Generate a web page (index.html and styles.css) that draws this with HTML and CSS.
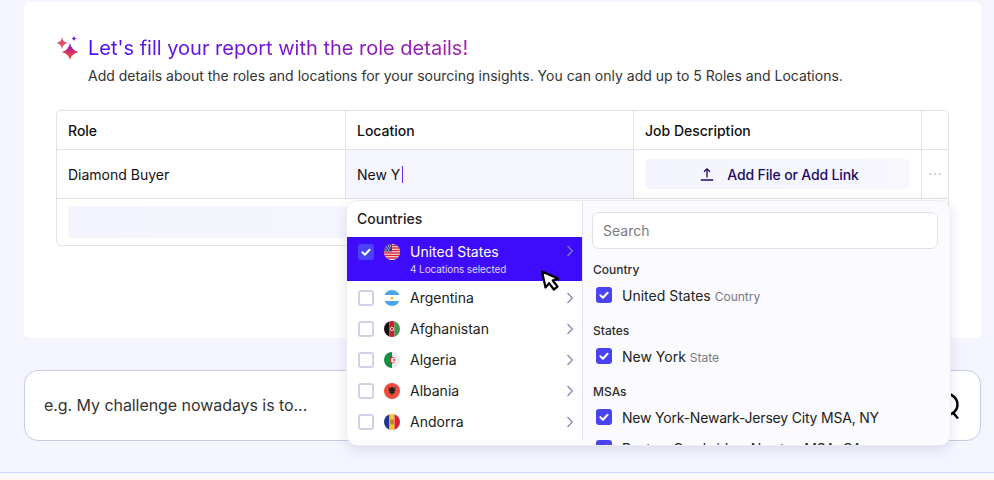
FILE: index.html
```html
<!DOCTYPE html>
<html>
  <head>
    <title>Role details</title>
    <meta charset="utf-8">
    <link rel="stylesheet" href="styles.css">
  </head>
  <body>
    <svg class="defs" width="0" height="0">
      <defs>
        <linearGradient id="spark" x1="0" y1="0" x2="0" y2="1">
          <stop offset="0" stop-color="#6414e6"/>
          <stop offset=".55" stop-color="#d8305f"/>
          <stop offset="1" stop-color="#ff4d3d"/>
        </linearGradient>
        <radialGradient id="spark-small">
          <stop offset="0" stop-color="#ff4d5a"/>
          <stop offset=".55" stop-color="#e0406f"/>
          <stop offset="1" stop-color="#6a18d8"/>
        </radialGradient>
        <symbol id="check" viewBox="0 0 16 16">
          <path d="M4.4 8.3l2.5 2.4 4.7-5" fill="none" stroke="#fff" stroke-width="2" stroke-linecap="round" stroke-linejoin="round"/>
        </symbol>
        <symbol id="chev" viewBox="0 0 8 12">
          <path d="M1.5 1l4.8 5-4.8 5" fill="none" stroke="#7f86b8" stroke-width="1.2"/>
        </symbol>
      </defs>
    </svg>

    <div class="page">
      <section class="card">
        <div class="title-row">
          <svg class="sparkle" width="24" height="24" viewBox="0 0 24 24">
            <path d="M14 7Q15.500 14.500 23 16Q15.500 17.500 14 24Q12.500 17.500 5.500 16Q12.500 14.500 14 7z" fill="url(#spark)"/>
            <path d="M6 1.500Q6.800 6 11.500 7Q6.800 8 6 13Q5.200 8 .8 7Q5.200 6 6 1.500z" fill="url(#spark-small)"/>
            <path d="M18 0Q18.400 2 20.300 2.500Q18.400 3 18 5Q17.600 3 15.700 2.500Q17.600 2 18 0z" fill="#6a14d8"/>
          </svg>
          <h1>Let's fill your report with the role details!</h1>
        </div>
        <p class="subtitle">Add details about the roles and locations for your sourcing insights. You can only add up to 5 Roles and Locations.</p>

        <div class="roles">
          <div class="cell head">Role</div>
          <div class="cell head">Location</div>
          <div class="cell head">Job Description</div>
          <div class="cell head last"></div>

          <div class="cell">Diamond Buyer</div>
          <div class="cell active">New Y<span class="caret"></span></div>
          <div class="cell">
            <button class="add-file">
              <svg width="16" height="16" viewBox="0 0 16 16">
                <path d="M8 11.500V3M5 5.800L8 2.800l3 3M1.800 14h12.400" fill="none" stroke="#1d0a6b" stroke-width="1.300"/>
              </svg>
              Add File or Add Link
            </button>
          </div>
          <div class="cell last dots">···</div>

          <div class="new-row"><div class="blank"></div></div>
        </div>
      </section>

      <div class="prompt">
        <span>e.g. My challenge nowadays is to...</span>
        <svg width="26" height="28" viewBox="0 0 26 28">
          <circle cx="12" cy="12.500" r="10.500" fill="none" stroke="#000" stroke-width="2.400"/>
          <path d="M17.500 20l5.500 6.500" stroke="#000" stroke-width="2.400"/>
        </svg>
      </div>

      <div class="popup">
        <div class="countries">
          <div class="pop-title">Countries</div>

          <div class="country selected">
            <span class="box on"><svg width="16" height="16"><use href="#check"/></svg></span>
            <svg class="flag" viewBox="0 0 16 16">
              <rect width="16" height="16" fill="#fff"/>
              <path d="M0 1.500h16M0 4h16M0 6.500h16M0 9h16M0 11.500h16M0 14h16" stroke="#d8232f" stroke-width="1.300"/>
              <rect width="8" height="7.500" fill="#3c3b8e"/>
              <path d="M1.500 2h1M4 2h1M6 2h1M2.500 4h1M5 4h1M1.500 6h1M4 6h1" stroke="#fff" stroke-width="1"/>
            </svg>
            <div class="country-name">
              United States
              <small>4 Locations selected</small>
            </div>
            <svg class="chev" width="8" height="12"><use href="#chev"/></svg>
          </div>

          <div class="country">
            <span class="box"></span>
            <svg class="flag" viewBox="0 0 16 16">
              <rect width="16" height="16" fill="#fff"/>
              <rect width="16" height="5" fill="#4aa6e8"/>
              <rect y="11" width="16" height="5" fill="#4aa6e8"/>
              <circle cx="8" cy="8" r="1.600" fill="#f5c33b"/>
            </svg>
            <div class="country-name">Argentina</div>
            <svg class="chev" width="8" height="12"><use href="#chev"/></svg>
          </div>

          <div class="country">
            <span class="box"></span>
            <svg class="flag" viewBox="0 0 16 16">
              <rect width="5.500" height="16" fill="#111"/>
              <rect x="5.500" width="5" height="16" fill="#c8202c"/>
              <rect x="10.500" width="5.500" height="16" fill="#3f9a4f"/>
              <circle cx="8" cy="8" r="1.700" fill="none" stroke="#fff" stroke-width=".8"/>
            </svg>
            <div class="country-name">Afghanistan</div>
            <svg class="chev" width="8" height="12"><use href="#chev"/></svg>
          </div>

          <div class="country">
            <span class="box"></span>
            <svg class="flag" viewBox="0 0 16 16">
              <rect width="8" height="16" fill="#12903f"/>
              <rect x="8" width="8" height="16" fill="#eee"/>
              <circle cx="8.500" cy="8" r="3.300" fill="#d9202c"/>
              <circle cx="9.400" cy="8" r="2.600" fill="#f4f4f4"/>
              <circle cx="10.200" cy="8" r="1" fill="#d9202c"/>
            </svg>
            <div class="country-name">Algeria</div>
            <svg class="chev" width="8" height="12"><use href="#chev"/></svg>
          </div>

          <div class="country">
            <span class="box"></span>
            <svg class="flag" viewBox="0 0 16 16">
              <rect width="16" height="16" fill="#ee4c3f"/>
              <path d="M8 3l1 2 2.500-1-1 2.500 1.300.5-1.600 1.500.8 2L9 10l-1 3-1-3-2 .5.800-2L4.200 7l1.300-.5-1-2.500L7 5z" fill="#222"/>
            </svg>
            <div class="country-name">Albania</div>
            <svg class="chev" width="8" height="12"><use href="#chev"/></svg>
          </div>

          <div class="country">
            <span class="box"></span>
            <svg class="flag" viewBox="0 0 16 16">
              <rect width="5.500" height="16" fill="#23358f"/>
              <rect x="5.500" width="5" height="16" fill="#f7c530"/>
              <rect x="10.500" width="5.500" height="16" fill="#d81f3a"/>
              <rect x="6.300" y="5.500" width="3.400" height="5" rx="1" fill="#c5762b"/>
            </svg>
            <div class="country-name">Andorra</div>
            <svg class="chev" width="8" height="12"><use href="#chev"/></svg>
          </div>
        </div>

        <div class="locations">
          <input class="search" type="text" placeholder="Search">

          <div class="loc-group">Country</div>
          <div class="loc">
            <span class="box on"><svg width="16" height="16"><use href="#check"/></svg></span>
            United States <small>Country</small>
          </div>

          <div class="loc-group">States</div>
          <div class="loc">
            <span class="box on"><svg width="16" height="16"><use href="#check"/></svg></span>
            New York <small>State</small>
          </div>

          <div class="loc-group">MSAs</div>
          <div class="loc msa">
            <span class="box on"><svg width="16" height="16"><use href="#check"/></svg></span>
            New York-Newark-Jersey City MSA, NY
          </div>
          <div class="loc msa">
            <span class="box on"><svg width="16" height="16"><use href="#check"/></svg></span>
            Boston-Cambridge-Newton MSA, CA
          </div>
        </div>
      </div>

      <svg class="pointer" width="20" height="22" viewBox="0 0 20 22">
        <path d="M2 1.500l3.500 16 3.600-4.300 4.700 6.300 3.700-2.800-4.700-6.200 5.200-1.900z" fill="#fff" stroke="#000" stroke-width="2.200" stroke-linejoin="round"/>
      </svg>
    </div>

    <footer class="foot"></footer>
  </body>
</html>
```

FILE: styles.css
```css
*{
  box-sizing: border-box;
}
html, body{
  height: 100%;
}
body{
  margin: 0;
  background-color: #f4f5fe;
  font-family: "Inter", "Liberation Sans", sans-serif;
  font-size: 14px;
  color: #222;
  overflow: hidden;
}
.defs{
  position: absolute;
}
.page{
  position: relative;
  padding: 2px 13px 0 24px;
}
.card{
  background-color: #fff;
  border-radius: 5px;
  padding: 34px 32px 92px;
}
.title-row{
  display: flex;
  align-items: center;
  gap: 8px;
}
.sparkle{
  flex: none;
}
h1{
  margin: 0;
  font-size: 20px;
  line-height: 24px;
  font-weight: 400;
  color: transparent;
  background: linear-gradient(90deg, #4a10f8, #a31fa8);
  background-clip: text;
  -webkit-background-clip: text;
  width: fit-content;
}
.subtitle{
  margin: 6px 0 24px 32px;
  line-height: 20px;
  color: #333;
}
.roles{
  display: grid;
  grid-template-columns: 289px 288px 288px 1fr;
  border: 1px solid #e2e2e6;
  border-radius: 5px;
  color: #111;
}
.cell{
  display: flex;
  align-items: center;
  padding: 0 11px;
  height: 49px;
  border-right: 1px solid #e2e2e6;
  border-bottom: 1px solid #e2e2e6;
}
.cell.head{
  height: 39px;
  font-weight: 500;
}
.cell.last{
  border-right: none;
}
.cell.active{
  background-color: #f4f5fd;
}
.caret{
  width: 1px;
  height: 17px;
  margin-left: 2px;
  background-color: #6a24e8;
}
.dots{
  justify-content: center;
  padding: 0;
  color: #c9c9cf;
  font-size: 16px;
}
.add-file{
  display: flex;
  align-items: center;
  justify-content: center;
  gap: 12px;
  width: 100%;
  height: 30px;
  padding: 0 0 0 3px;
  border: none;
  border-radius: 5px;
  background: linear-gradient(90deg, #f3f4fd, #f7f7fd);
  color: #1d0a6b;
  font-family: inherit;
  font-size: 14px;
  font-weight: 500;
  letter-spacing: -.15px;
}
.new-row{
  grid-column: 1 / -1;
  height: 46px;
  padding: 7px 11px;
}
.blank{
  height: 32px;
  border-radius: 4px;
  background: linear-gradient(90deg, #f3f4fd, #f8f8fd);
}
.prompt{
  display: flex;
  align-items: center;
  justify-content: flex-end;
  position: relative;
  height: 71px;
  margin: 32px 0 31px;
  padding: 0 19px;
  background-color: #fff;
  border: 1px solid #c6cbe8;
  border-radius: 14px;
  font-size: 16px;
  letter-spacing: -.06px;
  color: #333;
}
.prompt span{
  margin: 0 auto 2px 0;
}
.popup{
  position: absolute;
  left: 346px;
  top: 200px;
  width: 605px;
  height: 246px;
  display: flex;
  background-color: #fbfbff;
  border: 1px solid #ececf2;
  border-radius: 12px;
  box-shadow: 0 4px 12px rgba(40, 40, 90, .12);
  overflow: hidden;
}
.countries{
  flex: none;
  width: 236px;
  height: 239px;
  background-color: #fff;
  border-right: 1px solid #e2e2e8;
}
.pop-title{
  height: 36px;
  padding: 8px 10px 0;
  line-height: 19px;
  font-weight: 500;
  font-size: 14px;
  color: #222;
}
.country{
  display: flex;
  align-items: center;
  height: 31px;
  padding: 0 8px 0 11px;
}
.country.selected{
  align-items: flex-start;
  height: 44px;
  padding-top: 6px;
  background-color: #3f0cfb;
  color: #fff;
  margin-bottom: 1px;
}
.country.selected .box, .country.selected .flag{
  margin-top: 1px;
}
.country.selected .chev{
  margin-top: 2px;
}
.box{
  flex: none;
  width: 16px;
  height: 16px;
  border: 2px solid #cfd3ea;
  border-radius: 3px;
  background-color: #fff;
}
.box.on{
  border: none;
  background-color: #4a43f5;
}
.box svg{
  display: block;
}
.flag{
  flex: none;
  width: 16px;
  height: 16px;
  margin: 0 10px;
  border-radius: 50%;
}
.country-name{
  flex: 1;
  line-height: 17px;
  color: inherit;
}
.country-name small{
  display: block;
  margin-top: 3px;
  font-size: 10px;
  line-height: 12px;
  letter-spacing: -.1px;
  color: #dcd5ff;
}
.chev{
  flex: none;
}
.locations{
  flex: 1;
  padding: 11px 12px 0 9px;
}
.search{
  display: block;
  width: 100%;
  height: 37px;
  margin-bottom: 1px;
  padding: 0 10px;
  background-color: #fff;
  border: 1px solid #e0e0e6;
  border-radius: 7px;
  font-family: inherit;
  font-size: 14px;
}
.search::placeholder{
  color: #7a7a80;
}
.loc-group{
  margin-top: 13px;
  padding-left: 1px;
  line-height: 15px;
  font-size: 12px;
  font-weight: 500;
  color: #2c2c2c;
}
.loc{
  display: flex;
  align-items: center;
  gap: 10px;
  height: 30px;
  padding-left: 4px;
  margin-top: 3px;
  white-space: nowrap;
  color: #222;
}
.loc + .loc{
  margin-top: 1px;
}
.loc.msa{
  letter-spacing: -.2px;
}
.loc small{
  margin-left: -6px;
  padding-top: 2px;
  font-size: 12px;
  color: #77777d;
}
.pointer{
  position: absolute;
  left: 540px;
  top: 270px;
}
.foot{
  height: 8px;
  background-color: #f9f9f9;
  border-top: 1px solid #cdd3fa;
}
```
